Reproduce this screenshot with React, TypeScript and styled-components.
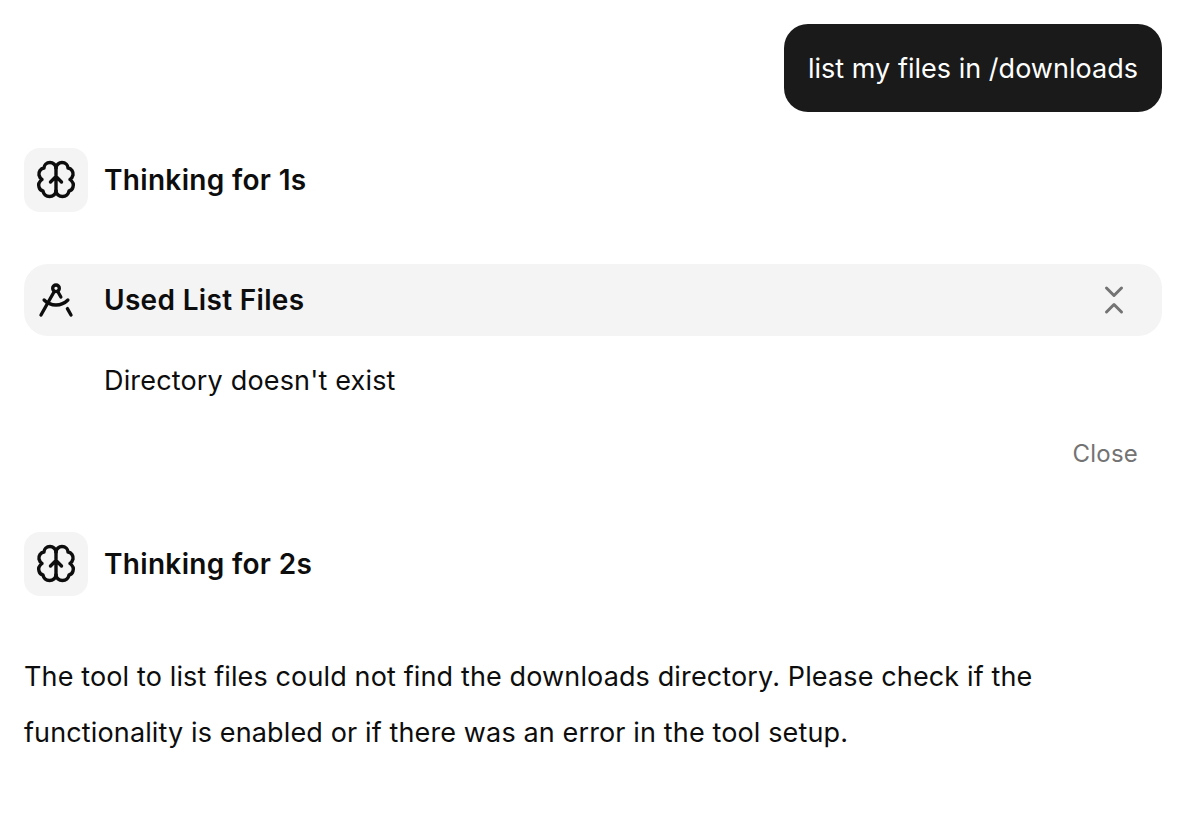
import React from "react"
import styled, { createGlobalStyle } from "styled-components"
import { DraftingCompass, ChevronsDownUp } from "lucide-react"

const GlobalStyle = createGlobalStyle`
  html, body {
    margin: 0;
    padding: 0;
    background: #fff;
    font-family: Inter, "Liberation Sans", sans-serif;
  }
`

const Page = styled.div`
  display: flex;
  flex-direction: column;
  padding: 24px 20px 0 24px;
  color: #0d0d0d;
`

const UserBubble = styled.div`
  align-self: flex-end;
  padding: 25px 24px 23px;
  border-radius: 24px;
  background: #1a1a1a;
  color: #fff;
  font-size: 27px;
  letter-spacing: 0.02px;
  line-height: 40px;
`

const ThinkingRow = styled.div<{ $top: number }>`
  display: flex;
  align-items: center;
  gap: 16px;
  margin-top: ${(p) => p.$top}px;
`

const IconTile = styled.div`
  display: flex;
  align-items: center;
  justify-content: center;
  width: 64px;
  height: 64px;
  border-radius: 16px;
  background: #f4f4f4;
`

const Heading = styled.div`
  font-size: 28px;
  font-weight: 600;
  letter-spacing: 0.32px;
  line-height: 40px;
`

const ToolHeader = styled.div`
  display: flex;
  align-items: center;
  height: 72px;
  margin-top: 52px;
  padding: 0 30px 0 12px;
  border-radius: 24px;
  background: #f4f4f4;
`

const ToolIcon = styled.div`
  display: flex;
  width: 40px;
  margin-right: 28px;
`

const ToolTitle = styled(Heading)`
  flex: 1;
`

const ToolResult = styled.div`
  margin: 25px 0 0 80px;
  font-size: 27px;
  letter-spacing: 0.17px;
  line-height: 40px;
`

const CloseRow = styled.div`
  display: flex;
  justify-content: flex-end;
  margin-top: 33px;
  padding-right: 24px;
  color: #737373;
  font-size: 24px;
  letter-spacing: 0.2px;
  line-height: 40px;
`

const Answer = styled.p`
  margin: 53px 0 0;
  font-size: 27px;
  letter-spacing: 0.13px;
  line-height: 56px;
`

const BrainIcon = () => (
  <svg width="64" height="64" viewBox="4 4 64 64" fill="none" stroke="#0d0d0d" strokeWidth="3.4" strokeLinecap="round" strokeLinejoin="round">
    <path d="M36 24C36 21 33 18.5 30 18.5C26.5 18.5 24 21 24 24C20.5 24.5 18.5 28 19 31C19.5 33 20.5 34.5 22 35.5C20 37 18 40 19 43C19.5 45 21 46.5 23 47C23.5 50 26 52.5 29.5 52.5C33 52.5 36 50 36 47" />
    <path d="M36 24C36 21 39 18.5 42 18.5C45.5 18.5 48 21 48 24C51.5 24.5 53.5 28 53 31C52.5 33 51.5 34.5 50 35.5C52 37 54 40 53 43C52.5 45 51 46.5 49 47C48.5 50 46 52.5 42.5 52.5C39 52.5 36 50 36 47" />
    <path d="M36 24V47M30.5 38L36 32.5L41.5 38" />
  </svg>
)

export default function App() {
  return (
    <>
      <GlobalStyle />
      <Page>
        <UserBubble>list my files in /downloads</UserBubble>
        <ThinkingRow $top={36}>
          <IconTile>
            <BrainIcon />
          </IconTile>
          <Heading>Thinking for 1s</Heading>
        </ThinkingRow>
        <ToolHeader>
          <ToolIcon>
            <DraftingCompass size={40} strokeWidth={2} />
          </ToolIcon>
          <ToolTitle>Used List Files</ToolTitle>
          <ChevronsDownUp size={36} color="#737373" strokeWidth={2} />
        </ToolHeader>
        <ToolResult>Directory doesn't exist</ToolResult>
        <CloseRow>Close</CloseRow>
        <ThinkingRow $top={58}>
          <IconTile>
            <BrainIcon />
          </IconTile>
          <Heading>Thinking for 2s</Heading>
        </ThinkingRow>
        <Answer>
          The tool to list files could not find the downloads directory. Please check if the
          <br />
          functionality is enabled or if there was an error in the tool setup.
        </Answer>
      </Page>
    </>
  )
}
